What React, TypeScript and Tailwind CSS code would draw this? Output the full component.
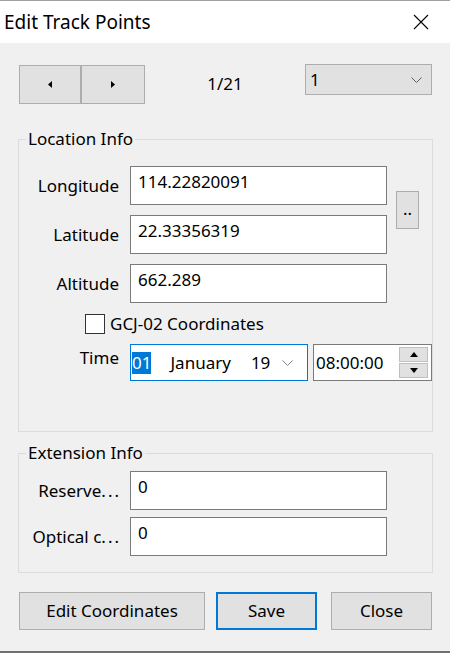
import React from "react";

const font = "font-['Noto_Sans',sans-serif]";

function Field({ label, value, cut }: { label: string; value: string; cut?: boolean }) {
  return (
    <div className="flex items-center">
      <div className="w-[100px] text-right text-[17px] leading-[23px]">
        {label}
        {cut && <span className="tracking-[2px] mr-[-2px]">...</span>}
      </div>
      <div className="ml-[11px] w-[257px] h-[39px] bg-white border border-[#7a7a7a] pl-[7px] pt-[3px] text-[17px] leading-[23px]">
        {value}
      </div>
    </div>
  );
}

function Chevron({ color = "#606060" }: { color?: string }) {
  return (
    <svg width="11" height="6" viewBox="0 0 11 6">
      <path d="M0.5 0.5 L5.5 5.5 L10.5 0.5" fill="none" stroke={color} strokeWidth="1" />
    </svg>
  );
}

function Tri({ dir }: { dir: "left" | "right" | "up" | "down" }) {
  if (dir === "left") return <svg width="4" height="7" viewBox="0 0 4 7"><polygon points="4,0 4,7 0,3.5" fill="#000" /></svg>;
  if (dir === "right") return <svg width="4" height="7" viewBox="0 0 4 7"><polygon points="0,0 0,7 4,3.5" fill="#000" /></svg>;
  if (dir === "up") return <svg width="8" height="5" viewBox="0 0 8 5"><polygon points="0,5 8,5 4,0" fill="#000" /></svg>;
  return <svg width="8" height="5" viewBox="0 0 8 5"><polygon points="0,0 8,0 4,5" fill="#000" /></svg>;
}

export default function App() {
  return (
    <div className={`${font} w-[450px] h-[653px] bg-[#f0f0f0] text-black flex flex-col`}>
      {/* title bar */}
      <div className="h-[43px] bg-white border-t border-[#a0a0a0] flex items-center justify-between pl-[4px] pr-[21px]">
        <span className="text-[19px] leading-[26px] -mt-[1px]">Edit Track Points</span>
        <svg width="16" height="16" viewBox="0 0 16 16" className="-mt-[1px]">
          <path d="M1 1 L15 15 M15 1 L1 15" stroke="#000" strokeWidth="1.1" />
        </svg>
      </div>

      <div className="flex-1 flex flex-col">
        {/* navigation row */}
        <div className="flex items-start mt-[21px] pl-[19px]">
          <div className="mt-[1px] w-[126px] h-[39px] flex bg-[#e1e1e1] border border-[#adadad]">
            <button className="w-[62px] h-full flex items-center justify-center border-r-2 border-[#adadad]">
              <Tri dir="left" />
            </button>
            <button className="flex-1 h-full flex items-center justify-center">
              <Tri dir="right" />
            </button>
          </div>
          <div className="w-[160px] h-[40px] flex items-center justify-center text-[17px]">1/21</div>
          <div className="w-[127px] h-[31px] bg-[#e1e1e1] border border-[#adadad] flex items-center justify-between pl-[4px] pr-[9px]">
            <span className="text-[17px] leading-[23px]">1</span>
            <Chevron />
          </div>
        </div>

        {/* Location Info */}
        <fieldset className="mt-[24px] ml-[18px] w-[415px] h-[304px] border border-[#dcdcdc]">
          <legend className="ml-[7px] px-[2px] text-[17px] leading-[22px]">Location Info</legend>
          <div className="mt-[16px] flex items-center">
            <div className="flex flex-col gap-[10px]">
              <Field label="Longitude" value="114.22820091" />
              <Field label="Latitude" value="22.33356319" />
            </div>
            <button className="ml-[9px] w-[23px] h-[38px] bg-[#e1e1e1] border border-[#adadad] text-[17px] leading-[20px] pb-[9px] flex items-end justify-center">
              ..
            </button>
          </div>
          <div className="mt-[10px]">
            <Field label="Altitude" value="662.289" />
          </div>
          <div className="mt-[11px] h-[20px] flex items-center">
            <div className="ml-[66px] w-[20px] h-[20px] bg-white border border-[#333333]" />
            <span className="ml-[5px] text-[17px] leading-[20px]">GCJ-02 Coordinates</span>
          </div>
          <div className="mt-[10px] flex items-start">
            <div className="w-[100px] text-right text-[17px] leading-[23px] mt-[2px]">Time</div>
            <div className="ml-[11px] w-[178px] h-[37px] bg-white border border-[#0078d7] flex items-center text-[17px] leading-[22px]">
              <span className="ml-[1px] bg-[#0078d7] text-white">01</span>
              <span className="ml-[19px]">January</span>
              <span className="ml-[20px]">19</span>
              <span className="ml-[12px] mt-[1px]"><Chevron color="#808080" /></span>
            </div>
            <div className="ml-[5px] w-[119px] h-[37px] bg-white border border-[#7a7a7a] flex items-center justify-between pl-[2px] pr-[3px]">
              <span className="text-[17px] leading-[23px]">08:00:00</span>
              <div className="flex flex-col gap-[1px]">
                <div className="w-[29px] h-[15px] bg-[#e1e1e1] border border-[#c0c0c0] flex items-center justify-center"><Tri dir="up" /></div>
                <div className="w-[29px] h-[15px] bg-[#e1e1e1] border border-[#c0c0c0] flex items-center justify-center"><Tri dir="down" /></div>
              </div>
            </div>
          </div>
        </fieldset>

        {/* Extension Info */}
        <fieldset className="mt-[10px] ml-[18px] w-[415px] h-[131px] border border-[#dcdcdc]">
          <legend className="ml-[7px] px-[2px] text-[17px] leading-[22px]">Extension Info</legend>
          <div className="mt-[7px] flex flex-col gap-[7px]">
            <Field label="Reserve" value="0" cut />
            <Field label="Optical c" value="0" cut />
          </div>
        </fieldset>

        {/* buttons */}
        <div className="mt-[19px] flex pl-[19px] text-[17px]">
          <button className="w-[186px] h-[38px] bg-[#e1e1e1] border border-[#adadad]">Edit Coordinates</button>
          <button className="ml-[11px] w-[101px] h-[38px] bg-[#e1e1e1] border-2 border-[#0078d7]">Save</button>
          <button className="ml-[14px] w-[101px] h-[38px] bg-[#e1e1e1] border border-[#adadad]">Close</button>
        </div>
      </div>
      <div className="h-[2px] bg-[#707070]" />
    </div>
  );
}
